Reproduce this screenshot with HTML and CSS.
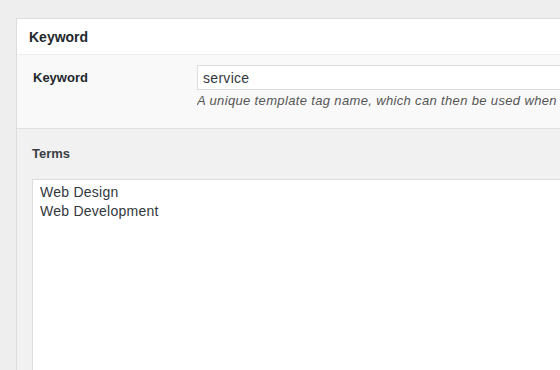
FILE: index.html
```html
<!DOCTYPE html>
<html lang="en">
<head>
    <meta charset="UTF-8">
    <meta name="viewport" content="width=device-width, initial-scale=1.0">
    <title>Keyword</title>
    <link rel="stylesheet" href="styles.css">
</head>
<body>
    <div class="postbox">
        <h2 class="postbox-title">Keyword</h2>

        <div class="field-row">
            <label class="field-label" for="keyword">Keyword</label>
            <div class="field-input">
                <input type="text" id="keyword" class="text-input" value="service">
                <p class="description">A unique template tag name, which can then be used when</p>
            </div>
        </div>

        <div class="terms">
            <label class="terms-label" for="terms">Terms</label>
            <textarea id="terms" class="terms-input">Web Design
Web Development</textarea>
        </div>
    </div>
</body>
</html>
```

FILE: styles.css
```css
/* the box is cut off by the window on the right and at the bottom */
html, body {
    height: 100%;
    overflow: hidden;
}
body {
    margin: 0;
    padding: 18px 0 0 16px;
    box-sizing: border-box;
    display: flex;
    background: #eeeeee;
    font-family: "Liberation Sans", Arial, sans-serif;
    color: #23282d;
}
.postbox {
    flex: 1;
    display: flex;
    flex-direction: column;
    background: #fff;
    border-top: 1px solid #dddddd;
    border-left: 1px solid #dddddd;
}
.postbox-title {
    margin: 0;
    padding: 9px 12px 7px;
    font-size: 14px;
    line-height: 19px;
    font-weight: bold;
    border-bottom: 1px solid #eeeeee;
}
.field-row {
    display: grid;
    grid-template-columns: 164px 1fr;
    padding: 10px 0 17px 16px;
    background: #f9f9f9;
    border-bottom: 1px solid #e1e1e1;
}
.field-label {
    padding-top: 3px;
    font-size: 13px;
    line-height: 20px;
    font-weight: bold;
}
.field-input {
    min-width: 0;
}
.text-input {
    display: block;
    width: 100%;
    height: 25px;
    box-sizing: border-box;
    margin: 0;
    padding: 0 5px;
    border: 1px solid #dddddd;
    border-right: 0;
    background: #fff;
    font-family: inherit;
    font-size: 14px;
    line-height: 23px;
    letter-spacing: 0.3px;
    color: #32373c;
    outline: none;
}
.description {
    margin: 1px 0 0;
    font-size: 13px;
    line-height: 20px;
    font-style: italic;
    letter-spacing: 0.35px;
    color: #555;
    white-space: nowrap;
    overflow: hidden;
}
.terms {
    flex: 1;
    display: flex;
    flex-direction: column;
    padding: 15px 0 0 15px;
    background: #f1f1f1;
}
.terms-label {
    display: block;
    font-size: 13px;
    line-height: 20px;
    font-weight: bold;
    color: #3a3f44;
}
.terms-input {
    flex: 1;
    display: block;
    width: 100%;
    box-sizing: border-box;
    margin-top: 15px;
    padding: 3px 7px;
    border: 1px solid #dddddd;
    border-right: 0;
    border-bottom: 0;
    background: #fff;
    font-family: inherit;
    font-size: 14px;
    line-height: 19px;
    letter-spacing: 0.25px;
    color: #32373c;
    resize: none;
    outline: none;
}
```
